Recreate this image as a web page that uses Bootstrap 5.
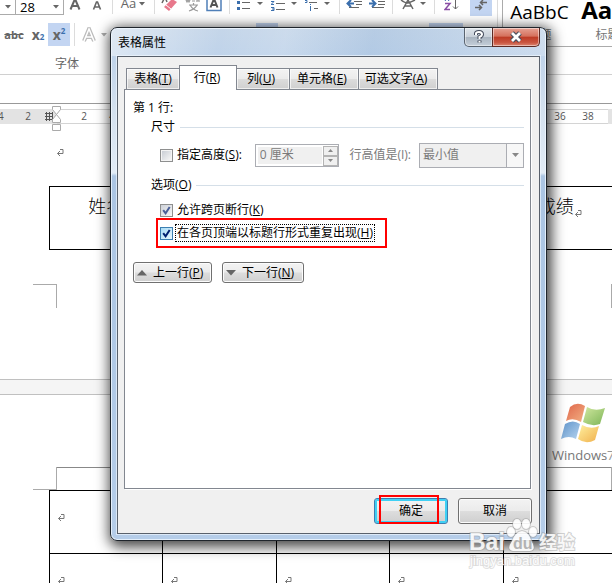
<!DOCTYPE html>
<html lang="zh-CN">
<head>
<meta charset="utf-8">
<meta name="viewport" content="width=device-width, initial-scale=1">
<title>表格属性</title>
<link href="https://cdn.jsdelivr.net/npm/bootstrap@5.3.0/dist/css/bootstrap.min.css" rel="stylesheet">
<style>
:root{--edge:#828790}
body{font:12px/16px "Open Sans","Noto Sans CJK SC",sans-serif;color:#000;background:#fff;overflow:hidden}
button,input,select{font:inherit;color:inherit}
u{text-underline-offset:1px}
.desk{min-height:100vh}
/* ribbon */
.ribbon{height:104px;border-bottom:1px solid #999}
.tools{height:75px;border-bottom:1px solid #d0d0d0}
.bar1,.bar2{display:grid;color:#666}
.bar1{height:16px;grid-template-columns:16px 48px 22px 22px 8px 34px 8px 24px 21px 22px 8px 34px 34px 34px 8px 23px 22px 8px 34px 8px 28px 26px}
.bar2{height:23px;margin-top:7px;grid-template-columns:28px 20px 22px 8px 32px 146px 22px 151px 34px}
.bar1>*,.bar2>*{display:flex;align-items:center;justify-content:center;border:0;padding:0;background:none;overflow:hidden}
.bar1 .combo{border:1px solid #ababab;border-top:0;border-left:0;height:15px;justify-content:space-between;padding:0 4px;background:#fff}
.bar1 .rule::after,.bar2 .rule::after{content:"";width:1px;height:100%;background:#dcdcdc}
.bar1 .rule{height:14px}
.num{font-size:13px;line-height:12px}
.bar1 .case{font-size:13px;line-height:14px;align-items:flex-start;gap:3px;overflow:visible;margin-top:-4px}
.case svg{margin-top:6px}
.on,.bar1>.on,.bar2>.on{background:#c3d5f2}
.bar1>.on{margin-left:4px}
.chr{font-size:14px;font-weight:700}
.chr sub,.chr sup{font-size:8px;color:#3b6fad}
.strike{font-size:11px;font-weight:700;text-decoration:line-through}
.grp{padding-left:55px;margin-top:10px;color:#666}
.gallery{height:47px;margin-left:4px;border:solid #ababab;border-width:0 0 1px 1px;overflow:hidden}
.look{width:73px;flex:none;text-align:center;background:none;border:0;padding:0;white-space:nowrap}
.look b,.look i{display:flex;justify-content:center;height:24px;font-style:normal}
.look i{font-size:19px;line-height:18px}.look b{font-size:24px;line-height:14px}
.look small{display:block;font-size:12px;color:#777}
.strip{border-left:1px solid #dcdcdc;margin-left:5px}
/* ruler */
.ruler{height:24px;padding-top:5px;color:#555;font-size:10px;line-height:14px}
.scale{height:15px}
.scale span{width:28px;flex:none;text-align:center}
.scale .cut{width:14px;text-align:left;text-indent:-2px}
.off{background:#e3e3e3}
.lead-in{width:57px}
.live{background:#fff;border:solid #d4d4d4;border-width:1px 0;padding-left:13px;width:551px;flex:none;line-height:13px}
.stop{left:50px;top:1px}
/* document */
.sheet{position:relative;overflow:hidden}
.one{height:252px;border-bottom:1px solid #c0c0c0}
.gap{height:14px;background:#f5f5f5}
.two{border-top:1px solid #c0c0c0;height:189px}
.first{padding:15px 0 0 56px;height:58px}
.grid{table-layout:fixed;width:568px;margin-left:49px;border-collapse:collapse}
.grid th,.grid td{border:1px solid #000;height:63px;vertical-align:top;padding:0}
.grid th{font:300 18px/24px "Noto Sans CJK SC",sans-serif;text-align:center;padding-top:6px}
.grid td{padding:17px 0 0 7px}
.corners{margin-top:34px}
.crop{width:24px;height:24px;margin-left:33px;border:solid #aaa;border-width:1px 1px 0 0}
.crop2{width:24px;height:23px;margin-left:33px;border:solid #aaa;border-width:0 1px 1px 0}
.edge{width:1px;background:#aaa}
.head{border-top:1px solid #888}
.brand{height:72px;margin-left:548px;padding-left:4px;overflow:hidden}
/* dialog */
.dlg{position:absolute;left:110px;right:65px;top:27px;border:1px solid #1f252c;border-radius:7px;padding:0 6px 6px;
 background:linear-gradient(100deg,#ffffff77,#ffffff00 25%,#ffffff22 40%,#7fa5cf33 60%,#ffffff33) 0 0/100% 28px no-repeat,linear-gradient(#c5d6e9 0,#bfd3ea 28px,#d3e0ee 80px,#e2ecf6 145px,#abc5e3 148px,#b5cde9 100%);
 box-shadow:inset 0 0 0 1px #f0f7ffcc,2px 3px 13px 3px rgba(0,0,0,.72)}
.ttl{height:28px}
.ttl h1{font:12px/28px "Noto Sans CJK SC",sans-serif;margin:0;padding-left:1px}
.cap{height:19px;border:1px solid #59636f;border-top:0;padding:0;display:flex;align-items:center;justify-content:center;box-shadow:inset 0 0 0 1px #ffffff77}
.ask{width:29px;border-radius:0 0 0 5px;background:linear-gradient(#dfe5eb,#c9d1da 48%,#a8b3bf 50%,#c5cfda)}
.shut{width:48px;margin-left:-1px;border-color:#5c2a24;border-radius:0 0 5px 0;background:linear-gradient(#e6a294,#d5705c 46%,#bd3a24 50%,#c95540 80%,#dc8570)}
.client{border:1px solid #59616c;background:#f0f0f0;padding:8px 7px 9px 6px;box-shadow:0 0 0 1px #f0f7ffaa}
.tabs{padding-left:2px;margin-bottom:-1px;position:relative;height:25px;border:0}
.tabs button{height:22px;border:1px solid var(--edge);background:linear-gradient(#f3f3f3,#ebebeb 50%,#dcdcdc 52%,#cfcfcf);padding:0;box-shadow:inset 0 0 0 1px #ffffffaa;margin-left:-1px}
.tabs button:first-child{margin-left:0}
.tabs .cur{height:25px;background:#fff;box-shadow:none;border-bottom:0;padding:0 2px 1px 0}
.tabs .w3,.tabs .w4,.tabs .w5{padding-right:4px}
.w1{width:54px}.w2{width:58px}.w3{width:54px}.w4{width:70px}.w5{width:80px}
.pane{border:1px solid var(--edge);background:#fff;min-height:400px;padding:8px 6px 0 8px;margin-right:1px;box-shadow:1px 1px 0 #fff}
.r20{height:20px}.r18{height:18px}.r38{height:38px}.r22{height:22px}.r26{height:26px}
.legend{font-size:12px;line-height:16px;width:auto;float:none;margin:0 5px 0 18px}
.line{height:1px;background:#d5dfe8;flex:1}
.ind{padding-left:27px}
.tick.form-check-input{width:13px;height:13px;margin:0 4px 0 0;border:1px solid #8e8f8f;border-radius:0;background:linear-gradient(135deg,#c9ced5,#f6f6f6) content-box,#f4f4f4;padding:1px;flex:none}
.tick.form-check-input:checked{background:url("data:image/svg+xml,%3Csvg xmlns='http://www.w3.org/2000/svg' viewBox='0 0 11 11'%3E%3Cpath d='M2.2 5.2L4.6 8.3 8.7 2' fill='none' stroke='%234a5f97' stroke-width='2'/%3E%3C/svg%3E") center/11px no-repeat,linear-gradient(135deg,#cdd1d8,#f6f6f6)}
.tick.hot.form-check-input:checked{border-color:#3c7fb1;background:url("data:image/svg+xml,%3Csvg xmlns='http://www.w3.org/2000/svg' viewBox='0 0 11 11'%3E%3Cpath d='M2.2 5.2L4.6 8.3 8.7 2' fill='none' stroke='%23001f70' stroke-width='2'/%3E%3C/svg%3E") center/11px no-repeat,linear-gradient(135deg,#a9dcf6,#e8f7fd)}
.mute{color:#7a7a7a;margin:0 8px 0 auto}
.spin{width:84px;height:23px;border:1px solid #abadb3;margin-left:13px;padding:1px}
.spin input{width:64px;border:0;background:#f0f0f0;padding:0 0 0 2px;margin:1px;color:#7a7a7a}
.spin button{width:15px;height:10px;border:1px solid #b4b4b4;background:#f0f0f0;padding:0;display:flex;align-items:center;justify-content:center}
.drop{width:105px;height:25px;position:relative}
.drop select{appearance:none;width:100%;height:100%;border:1px solid #abadb3;background:#f0f0f0;color:#7a7a7a;padding:0 3px;border-radius:0;opacity:1}
.drop span{position:absolute;right:0;top:0;bottom:0;width:18px;border:1px solid #abadb3;background:#f7f7f7;pointer-events:none}
.marked{outline:2px solid #f00;margin-left:25px;width:227px;padding-left:2px}
.focus{border:1px dotted #000;padding:0 1px;margin-left:-2px;line-height:16px}
.push{border:1px solid #707070;border-radius:3px;background:linear-gradient(#f3f3f3,#ebebeb 49%,#dddddd 51%,#cfcfcf);box-shadow:inset 0 0 0 1px #fcfcfc;padding:0;height:21px}
.nav-row{gap:10px;margin-top:16px}
.step{padding-left:3px;display:flex;align-items:center;gap:6px}
.prev{width:79px}.next{width:82px}
.act{width:74px;height:26px}
.def{border-color:#3c7fb1;box-shadow:inset 0 0 0 2px #3fd0f4}
.ring{position:absolute;left:5px;top:-3px;width:60px;height:29px;border:2px solid #f00;pointer-events:none}
.foot{padding:9px 0 0;gap:10px}
.stamp{position:absolute;left:468px;top:516px;pointer-events:none}
</style>
<script src="https://cdn.jsdelivr.net/npm/bootstrap@5.3.0/dist/js/bootstrap.bundle.min.js"></script>
</head>
<body>
<svg width="0" height="0" class="position-absolute">
 <symbol id="dn" viewBox="0 0 6 4"><path d="M0 0h6L3 3.5z" fill="currentColor"/></symbol>
 <symbol id="ret" viewBox="0 0 8 8"><path d="M4 1.5h3v4H1.5M4 3L1.500 5.500 4 8" fill="none" stroke="#777"/></symbol>
</svg>
<div class="desk position-relative overflow-hidden">
 <header class="ribbon">
  <div class="tools d-flex">
   <div class="flex-shrink-0">
    <div class="bar1">
     <button class="combo justify-content-end" aria-label="字体"><svg width="6" height="4"><use href="#dn"/></svg></button>
     <button class="combo text-black num">28<svg width="6" height="4" color="#666"><use href="#dn"/></svg></button>
     <button aria-label="增大字号"><svg width="12" height="16"><path d="M1.500 9.500L5.500 0h1L10.500 9.500M3 6h6" fill="none" stroke="#666" stroke-width="2"/></svg></button>
     <button aria-label="缩小字号"><svg width="10" height="16"><path d="M1.500 9.500L4.500 2h1L8.500 9.500M3 7h4" fill="none" stroke="#666" stroke-width="1.600"/></svg></button>
     <span class="rule"></span>
     <button class="case">Aa<svg width="6" height="4"><use href="#dn"/></svg></button>
     <span class="rule"></span>
     <button aria-label="清除格式"><svg width="18" height="16"><path d="M1 3L4-3M4-3L6 2" stroke="#666" stroke-width="1.500"/><path d="M3 7L11-1 16 2 8 11z" fill="#e8788c"/><path d="M5 5L10 9" stroke="#fff"/></svg></button>
     <button aria-label="拼音指南"><svg width="16" height="16"><path d="M1 0l1 2 1-2 1 2 1-2M7 1h3M12 2V0h2v2M4 5h9M8.500 3v2M12 5Q10 9 4 11M5 5Q8 10 13 11" fill="none" stroke="#999" stroke-width="1.200"/></svg></button>
     <button aria-label="字符边框"><svg width="16" height="16"><path d="M1 0V10.500H15V0" fill="none" stroke="#4f7fb8" stroke-width="1.500"/><path d="M4.500 7.500L7.500 0h1L11.500 7.500M6 5h4" fill="none" stroke="#555" stroke-width="2"/></svg></button>
     <span class="rule"></span>
     <button aria-label="项目符号"><svg width="26" height="16"><path d="M5 2.500h8M5 8.500h8" stroke="#666"/><path d="M0 2.500h3M0 8.500h3" stroke="#3b6fad" stroke-width="3"/><path d="M20 2h6L23 5z" fill="#666"/></svg></button>
     <button aria-label="编号"><svg width="26" height="16"><path d="M5 3.500h9M5 9.500h9" stroke="#666"/><path d="M0 1.500h3L0 4.500h3M0 7.500h3v3H0M1 9h2" fill="none" stroke="#3b6fad"/><path d="M20 2h6L23 5z" fill="#666"/></svg></button>
     <button aria-label="多级列表"><svg width="26" height="16"><path d="M4 2.500h8M9 8.500h4" stroke="#666"/><path d="M0 .500h2v2H0M5.500 6v5M5 4.500h1" fill="none" stroke="#3b6fad"/><path d="M19 2h6L22 5z" fill="#666"/></svg></button>
     <span class="rule"></span>
     <button aria-label="减少缩进"><svg width="17" height="16"><path d="M8 1.500h8M10 4.500h6M3 7.500h10" stroke="#666"/><path d="M8 3.500H2M5 0L1.500 3.500 5 7" fill="none" stroke="#3b6fad" stroke-width="2"/></svg></button>
     <button aria-label="增加缩进"><svg width="17" height="16"><path d="M9 1.500h7M9 4.500h7M3 7.500h12" stroke="#666"/><path d="M0 3.500H6M3 0L6.500 3.500 3 7" fill="none" stroke="#3b6fad" stroke-width="2"/></svg></button>
     <span class="rule"></span>
     <button aria-label="中文版式"><svg width="26" height="16"><path d="M3 9L8 0 13 9M1 0Q5 3 7 3T15 0M5 6h6" fill="none" stroke="#666" stroke-width="1.500"/><path d="M20 2h6L23 5z" fill="#666"/></svg></button>
     <span class="rule"></span>
     <button aria-label="排序"><svg width="16" height="16"><path d="M1 1L3-2 5 1" stroke="#3b6fad" fill="none"/><path d="M1 3.500H6L1 9.500H6" stroke="#8a4fa5" fill="none" stroke-width="1.500"/><path d="M11.500 0V9M9 6.500L11.500 9 14 6.500" stroke="#666" fill="none"/></svg></button>
     <button class="on" aria-label="编辑标记"><svg width="14" height="16"><path d="M13 2.500H7M9 0L6.500 2.500 9 5M1 7.500H7M5 5L7.500 7.500 5 10" stroke="#666" fill="none" stroke-width="1.500"/></svg></button>
    </div>
    <div class="bar2">
     <button class="strike">abc</button>
     <button class="chr">x<sub>2</sub></button>
     <button class="chr on">x<sup>2</sup></button>
     <span class="rule"></span>
     <button class="gap-1" aria-label="文本效果"><svg width="16" height="16"><path d="M3 14L8 2 13 14M5 10h6" fill="none" stroke="#bbb" stroke-width="4"/><path d="M3 14L8 2 13 14M5 10h6" fill="none" stroke="#fff" stroke-width="1.500"/></svg><svg width="6" height="4" color="#aaa"><use href="#dn"/></svg></button>
     <span></span><span class="on"></span><span></span><span class="on"></span>
    </div>
    <div class="grp">字体</div>
   </div>
   <div class="strip flex-grow-1">
    <div class="gallery d-flex">
     <button class="look"><i>AaBbC</i><small>标题</small></button>
     <button class="look"><b>AaBb</b><small>标题 1</small></button>
    </div>
   </div>
  </div>
 </header>
 <div class="ruler position-relative">
  <div class="scale d-flex">
   <div class="off lead-in d-flex flex-shrink-0"><span class="cut">4</span><span>2</span>
    <svg width="15" height="15"><path d="M3 4.500h8M3 7.500h8M3 10.500h8M4.500 3v9M7.500 3v9M10.500 3v9" stroke="#555"/></svg></div>
   <div class="live d-flex"><span>2</span><span>4</span><span>6</span><span>8</span><span>10</span><span>12</span><span>14</span><span>16</span><span>18</span><span>20</span><span>22</span><span>24</span><span>26</span><span>28</span><span>30</span><span>32</span><span>34</span><span>36</span><span>38</span></div>
   <div class="off flex-grow-1"></div>
  </div>
  <svg class="stop position-absolute" width="12" height="26"><path d="M2.500 1.500h8v3L6.500 9.500l4 5v3h-8v-3l4-5-4-5zM2.500 19.500h8v6h-8z" fill="#fff" stroke="#aaa"/></svg>
 </div>
 <main>
  <section class="sheet one">
   <div class="first"><svg width="8" height="8"><use href="#ret"/></svg></div>
   <table class="grid"><tr><th>姓名</th><th></th><th></th><th></th><th>成绩<svg width="8" height="8" class="align-bottom"><use href="#ret"/></svg></th></tr></table>
   <div class="corners d-flex justify-content-between"><div class="crop"></div><div class="edge"></div></div>
  </section>
  <div class="gap"></div>
  <section class="sheet two">
   <div class="brand">
    <svg width="64" height="72"><g transform="translate(8 6)">
     <linearGradient id="a" x2="1" y2="1"><stop stop-color="#e0664a"/><stop offset="1" stop-color="#f2b184"/></linearGradient>
     <linearGradient id="b" x2="1" y2="1"><stop stop-color="#d2e8a0"/><stop offset="1" stop-color="#7db557"/></linearGradient>
     <linearGradient id="c" x2="1" y2="1"><stop stop-color="#5f94cb"/><stop offset="1" stop-color="#b5d3ee"/></linearGradient>
     <linearGradient id="d" x2="1" y2="1"><stop stop-color="#fff0a0"/><stop offset="1" stop-color="#f0b04c"/></linearGradient>
     <g transform="translate(1 -1)"><path d="M9 7Q16 1 24 6L20 22Q12 17 5 21z" fill="url(#a)"/><path d="M26 7Q34 12 44 8L39 24Q31 27 22 22z" fill="url(#b)"/>
     <path d="M4 24Q12 19 19 24L15 39Q8 35 0 39z" fill="url(#c)"/><path d="M21 25Q30 30 38 26L34 40Q25 45 17 39z" fill="url(#d)"/></g></g>
     <text x="0" y="65" font-size="13" fill="#777">Windows</text><text x="55" y="65" font-size="13" fill="#999">7</text></svg>
   </div>
   <div class="d-flex"><div class="crop2"></div><div class="head flex-grow-1"></div><div class="edge"></div></div>
   <table class="grid">
    <tr><td><svg width="8" height="8"><use href="#ret"/></svg></td><td></td><td></td><td></td><td></td></tr>
    <tr><td><svg width="8" height="8"><use href="#ret"/></svg></td><td><svg width="8" height="8"><use href="#ret"/></svg></td><td><svg width="8" height="8"><use href="#ret"/></svg></td><td><svg width="8" height="8"><use href="#ret"/></svg></td><td><svg width="8" height="8"><use href="#ret"/></svg></td></tr>
   </table>
  </section>
 </main>

 <form class="dlg" onsubmit="return false">
  <div class="ttl d-flex justify-content-between">
   <h1>表格属性</h1>
   <div class="d-flex">
    <button class="cap ask" aria-label="帮助"><svg width="12" height="14"><path d="M3 5V3.500Q3 2 6 2t3 2.500Q9 6 6.500 7V9M6.500 10.500v2" fill="none" stroke="#454c5c" stroke-width="4"/><path d="M3 5V3.500Q3 2 6 2t3 2.500Q9 6 6.500 7V9M6.500 11v1.500" fill="none" stroke="#fff" stroke-width="2"/></svg></button>
    <button class="cap shut" aria-label="关闭"><svg width="14" height="12"><path d="M3 2L11 10M11 2L3 10" stroke="#454c5c" stroke-width="5"/><path d="M3 2L11 10M11 2L3 10" stroke="#fff" stroke-width="2.800"/></svg></button>
   </div>
  </div>
  <div class="client">
   <div class="tabs d-flex align-items-end" role="tablist">
    <button role="tab" class="w1">表格(<u>T</u>)</button><button role="tab" class="w2 cur" aria-selected="true">行(<u>R</u>)</button><button role="tab" class="w3">列(<u>U</u>)</button><button role="tab" class="w4">单元格(<u>E</u>)</button><button role="tab" class="w5">可选文字(<u>A</u>)</button>
   </div>
   <div class="pane">
    <div class="r20 d-flex align-items-center">第 1 行:</div>
    <fieldset>
     <div class="r18 d-flex align-items-center"><legend class="legend">尺寸</legend><span class="line"></span></div>
     <div class="r38 d-flex align-items-center ind">
      <input type="checkbox" class="form-check-input tick" id="h"><label for="h">指定高度(<u>S</u>):</label>
      <div class="spin d-flex"><input type="text" value="0 厘米" aria-label="高度" readonly>
       <div><button aria-label="增加"><svg width="5" height="3"><path d="M0 3h5L2.500 0z" fill="#888"/></svg></button><button aria-label="减少"><svg width="5" height="3"><path d="M0 0h5L2.500 3z" fill="#888"/></svg></button></div></div>
      <label for="v" class="mute">行高值是(I):</label>
      <div class="drop"><select id="v"><option>最小值</option></select><span class="d-flex align-items-center justify-content-center"><svg width="7" height="4"><path d="M0 0h7L3.500 4z" fill="#888"/></svg></span></div>
     </div>
    </fieldset>
    <fieldset>
     <div class="r22 d-flex align-items-center"><legend class="legend">选项(<u>O</u>)</legend><span class="line"></span></div>
     <div class="r20 d-flex align-items-center ind mt-1"><input type="checkbox" class="form-check-input tick" id="k" checked><label for="k">允许跨页断行(<u>K</u>)</label></div>
     <div class="r26 d-flex align-items-center marked"><input type="checkbox" class="form-check-input tick hot" id="t" checked><label for="t" class="focus">在各页顶端以标题行形式重复出现(<u>H</u>)</label></div>
    </fieldset>
    <div class="d-flex nav-row">
     <button class="push step prev"><svg width="10" height="6"><path d="M0 5.500h10L5 0z" fill="#666"/></svg><span>上一行(<u>P</u>)</span></button>
     <button class="push step next"><svg width="10" height="6"><path d="M0 0h10L5 5.500z" fill="#666"/></svg><span>下一行(<u>N</u>)</span></button>
    </div>
   </div>
   <div class="foot d-flex justify-content-end">
    <div class="position-relative"><button class="push act def">确定</button><span class="ring"></span></div>
    <button class="push act">取消</button>
   </div>
  </div>
 </form>

 <svg class="stamp" width="112" height="56" font-family="'Liberation Sans','Noto Sans CJK SC',sans-serif" font-weight="bold" fill="#fff" fill-opacity=".9" stroke="#999" stroke-opacity=".45" stroke-width="2" paint-order="stroke">
  <text x="1" y="34" font-size="23">Bai</text>
  <ellipse cx="43" cy="16" rx="4" ry="5"/><ellipse cx="49" cy="8" rx="4" ry="5"/><ellipse cx="58" cy="8" rx="4" ry="5"/><ellipse cx="65" cy="16" rx="4" ry="5"/>
  <path d="M54 15Q61 16 63 24 69 34 62 35H45Q38 34 44 25 47 16 54 15z"/>
  <text x="45" y="33" font-size="16" fill="#aaa" stroke="none">du</text>
  <text x="71" y="33" font-size="18">经验</text>
  <text x="2" y="49" font-size="13" font-weight="normal" stroke-opacity=".3">jingyan.baidu.com</text>
 </svg>
</div>
</body>
</html>
